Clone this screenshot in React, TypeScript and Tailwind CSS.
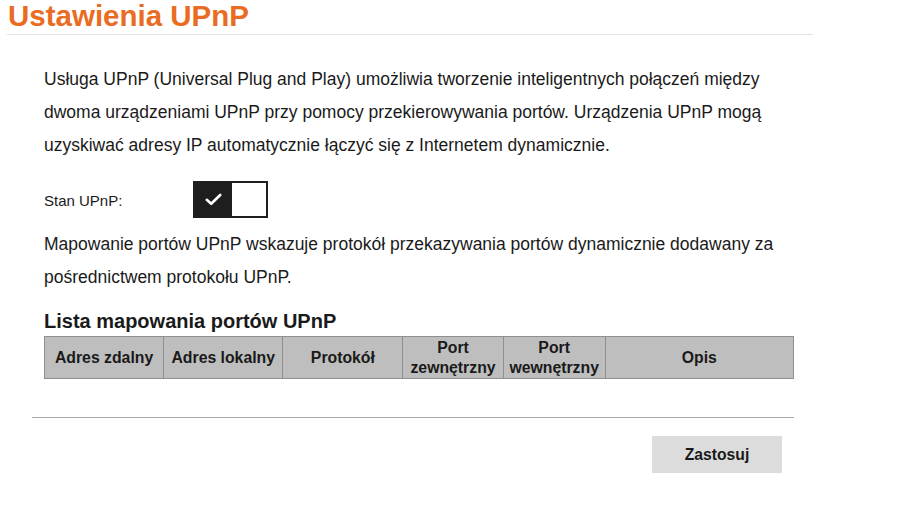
import React from "react";

const cols = [
  { w: "w-[119px]", label: ["Adres zdalny"] },
  { w: "w-[119px]", label: ["Adres lokalny"] },
  { w: "w-[120px]", label: ["Protokół"] },
  { w: "w-[100px]", label: ["Port", "zewnętrzny"] },
  { w: "w-[102px]", label: ["Port", "wewnętrzny"] },
  { w: "w-[188px]", label: ["Opis"] },
];

export default function App() {
  return (
    <div className="w-[901px] h-[511px] bg-white overflow-hidden text-[#1a1a1a] font-['Liberation_Sans',Arial,sans-serif]">
      <div className="ml-[7px] w-[806px] h-[35px] border-b border-[#e2e2e2]">
        <h1 className="text-[29.5px] leading-[32px] font-bold text-[#ea6c22] pl-[1px]">Ustawienia UPnP</h1>
      </div>

      <div className="pl-[44px]">
        <p className="mt-[28px] text-[17.5px] leading-[33px]">
          Usługa UPnP (Universal Plug and Play) umożliwia tworzenie inteligentnych połączeń między
          <br />
          dwoma urządzeniami UPnP przy pomocy przekierowywania portów. Urządzenia UPnP mogą
          <br />
          uzyskiwać adresy IP automatycznie łączyć się z Internetem dynamicznie.
        </p>

        <div className="mt-[19px] flex items-center h-[37px]">
          <span className="w-[149px] text-[15px] leading-[20px] pt-[2px]">Stan UPnP:</span>
          <div className="flex w-[75px] h-[37px]">
            <div className="w-[39px] h-full bg-[#1e1e1e] flex items-center justify-center pl-[2px]">
              <svg width="17" height="13" viewBox="0 0 17 13" fill="none">
                <path d="M1.8 6.8 L6.2 10.8 L15.2 2" stroke="white" strokeWidth="2.6" strokeLinecap="round" strokeLinejoin="round" />
              </svg>
            </div>
            <div className="flex-1 h-full bg-white border-2 border-l-0 border-[#1e1e1e]" />
          </div>
        </div>

        <p className="mt-[10px] text-[17.5px] leading-[33px]">
          Mapowanie portów UPnP wskazuje protokół przekazywania portów dynamicznie dodawany za
          <br />
          pośrednictwem protokołu UPnP.
        </p>

        <h2 className="mt-[15px] text-[20px] leading-[24px] font-bold">Lista mapowania portów UPnP</h2>

        <table className="mt-[3px] border-collapse w-[750px] table-fixed">
          <thead>
            <tr className="h-[42px] bg-[#bebebe]">
              {cols.map((c, i) => (
                <th
                  key={i}
                  className={`${c.w} border border-[#8f8f8f] p-0 text-center align-middle font-bold text-[15.8px] leading-[20px]`}
                >
                  {c.label.map((l, j) => (
                    <div key={j}>{l}</div>
                  ))}
                </th>
              ))}
            </tr>
          </thead>
        </table>
      </div>

      <div className="ml-[32px] mt-[38px] w-[762px] border-t border-[#a8a8a8]" />

      <div className="ml-[652px] mt-[18px] w-[130px] h-[37px] bg-[#dcdcdc] flex items-center justify-center">
        <span className="font-bold text-[15.7px] leading-[20px]">Zastosuj</span>
      </div>
    </div>
  );
}
